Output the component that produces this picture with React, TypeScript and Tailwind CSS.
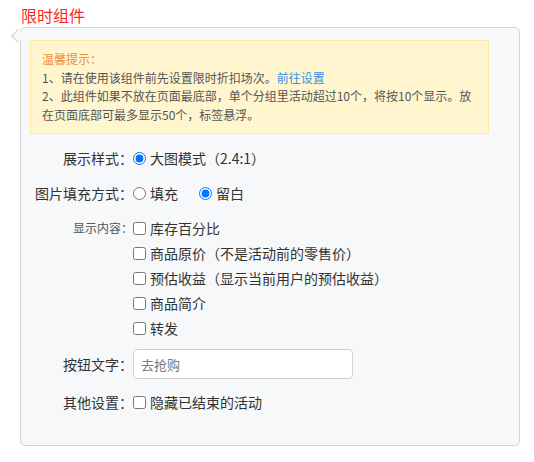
const font = { fontFamily: '"Noto Sans CJK SC", "Microsoft YaHei", sans-serif' };

const contentOptions = [
  '库存百分比',
  '商品原价（不是活动前的零售价）',
  '预估收益（显示当前用户的预估收益）',
  '商品简介',
  '转发',
];

function Label({ children, small }: { children: React.ReactNode; small?: boolean }) {
  return (
    <div className={`w-[112px] shrink-0 text-right ${small ? 'text-[12px] leading-[20px] text-[#555]' : 'text-[14px] leading-[20px] text-[#333]'}`}>
      {children}
    </div>
  );
}

function Radio({ label, checked, name }: { label: string; checked?: boolean; name: string }) {
  return (
    <label className="flex h-[20px] items-center gap-[4px] leading-[20px]">
      <input type="radio" name={name} defaultChecked={checked} className="m-0 h-[13px] w-[13px] accent-[#0075ff]" />
      <span>{label}</span>
    </label>
  );
}

function Check({ label }: { label: string }) {
  return (
    <label className="flex h-[20px] items-center gap-[4px] text-[14px] leading-[20px] text-[#333]">
      <input type="checkbox" className="m-0 h-[13px] w-[13px]" />
      <span>{label}</span>
    </label>
  );
}

export default function App() {
  return (
    <div className="min-h-[462px] w-[534px] bg-white" style={font}>
      <div className="pl-[21px] pt-[4px] text-[16px] leading-[23px] text-[#ff1f1f]">限时组件</div>

      <div className="relative ml-[20px] h-[419px] w-[500px] rounded-[5px] border border-[#d4d4d4] bg-[#f7f8fa] pt-[12px] pl-[9px]">
        <div className="absolute left-[-8px] top-[3px] h-[10px] w-[10px] rotate-45 border-b border-l border-[#d4d4d4] bg-[#f7f8fa]" />

        <div className="w-[459px] border border-[#fbe7a7] bg-[#fff6cf] px-[11px] pt-[9px] pb-[9px] text-[12px] leading-[18.5px] text-[#555]">
          <div className="text-[#f7873d]">温馨提示：</div>
          <div>
            1、请在使用该组件前先设置限时折扣场次。<span className="text-[#3a8ee6]">前往设置</span>
          </div>
          <div>2、此组件如果不放在页面最底部，单个分组里活动超过10个，将按10个显示。放</div>
          <div>在页面底部可最多显示50个，标签悬浮。</div>
        </div>

        <div className="ml-[-9px] mt-[14px] flex flex-col">
          <div className="flex h-[20px] items-center">
            <Label>展示样式：</Label>
            <div className="flex items-center text-[14px] text-[#333]">
              <Radio name="style" label="大图模式（2.4:1）" checked />
            </div>
          </div>

          <div className="mt-[15px] flex h-[20px] items-center">
            <Label>图片填充方式：</Label>
            <div className="flex items-center gap-[21px] text-[14px] text-[#333]">
              <Radio name="fill" label="填充" />
              <Radio name="fill" label="留白" checked />
            </div>
          </div>

          <div className="mt-[15px] flex items-start">
            <Label small>显示内容：</Label>
            <div className="flex flex-col gap-[5px]">
              {contentOptions.map((o) => (
                <Check key={o} label={o} />
              ))}
            </div>
          </div>

          <div className="mt-[11px] flex h-[30px] items-center">
            <Label>按钮文字：</Label>
            <input
              placeholder="去抢购"
              className="h-[30px] w-[220px] rounded-[4px] border border-[#d0d0d0] bg-white px-[7px] text-[13px] text-[#333] outline-none placeholder:text-[#777]"
              style={font}
            />
          </div>

          <div className="mt-[13px] flex h-[20px] items-center">
            <Label>其他设置：</Label>
            <Check label="隐藏已结束的活动" />
          </div>
        </div>
      </div>
    </div>
  );
}
